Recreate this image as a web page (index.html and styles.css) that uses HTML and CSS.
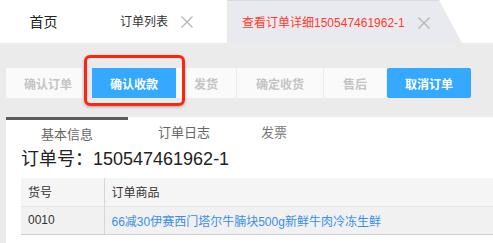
FILE: index.html
```html
<!DOCTYPE html>
<html lang="zh-CN">
<head>
    <meta charset="UTF-8">
    <meta name="viewport" content="width=device-width, initial-scale=1.0">
    <title>查看订单详细</title>
    <link rel="stylesheet" href="styles.css">
</head>
<body>

<div class="tabbar">
    <div class="tab tab-home">首页</div>
    <div class="tab tab-closable">
        <span>订单列表</span>
        <svg class="close" width="12" height="12" viewBox="0 0 12 12"><path d="M0.5 0.5L11.5 11.5M11.5 0.5L0.5 11.5"/></svg>
    </div>
    <div class="tab tab-closable tab-active">
        <span>查看订单详细150547461962-1</span>
        <svg class="close" width="12" height="12" viewBox="0 0 12 12"><path d="M0.5 0.5L11.5 11.5M11.5 0.5L0.5 11.5"/></svg>
    </div>
</div>

<div class="actions">
    <button class="btn btn-first">确认订单</button>
    <div class="highlight-wrap">
        <button class="btn btn-primary btn-wide">确认收款</button>
        <div class="highlight"></div>
    </div>
    <button class="btn btn-ship">发货</button>
    <button class="btn btn-receive">确定收货</button>
    <button class="btn btn-after">售后</button>
    <button class="btn btn-primary btn-wide">取消订单</button>
</div>

<div class="panel">
    <div class="detail-tabs">
        <div class="detail-tab active">基本信息</div>
        <div class="detail-tab log">订单日志</div>
        <div class="detail-tab invoice">发票</div>
    </div>
    <div class="panel-body">
        <h2 class="order-no">订单号：150547461962-1</h2>
        <table class="goods">
            <thead>
                <tr>
                    <th class="col-no">货号</th>
                    <th>订单商品</th>
                </tr>
            </thead>
            <tbody>
                <tr>
                    <td class="col-no">0010</td>
                    <td><a href="#">66减30伊赛西门塔尔牛腩块500g新鲜牛肉冷冻生鲜</a></td>
                </tr>
            </tbody>
        </table>
    </div>
</div>

</body>
</html>
```

FILE: styles.css
```css
body {
    margin: 0;
    width: 493px;
    height: 243px;
    overflow: hidden;
    background: #ebebeb;
    font-family: "Liberation Sans", "Noto Sans CJK SC", sans-serif;
    font-size: 12px;
    color: #333;
}
.tabbar {
    display: flex;
    height: 43px;
    background: #fff;
}
.tab {
    display: flex;
    flex: none;
    align-items: center;
    height: 43px;
    box-sizing: border-box;
    line-height: 16px;
    padding-top: 1px;
    white-space: nowrap;
}
.tab-home {
    width: 87px;
    justify-content: center;
    font-size: 14px;
    color: #222;
}
.tab-closable {
    padding: 1px 34px 0 33px;
    gap: 13px;
    color: #333;
}
.tab-active {
    width: 235px;
    padding-left: 15px;
    padding-right: 0;
    color: #ff3b2b;
    background: #e9eaf0;
    border-top: 1px solid #dadbe0;
    clip-path: polygon(0 0, calc(100% - 23px) 0, 100% 100%, 0 100%);
}
.close {
    flex: none;
    fill: none;
    stroke: #b5b5b5;
    stroke-width: 1.3;
}
.actions {
    display: flex;
    margin-top: 25px;
    padding-left: 6px;
    height: 30px;
}
.btn {
    height: 30px;
    border: none;
    margin: 0 1px 0 0;
    padding: 0;
    background: #fafafa;
    color: #c4c4c4;
    font-family: inherit;
    font-size: 12px;
    font-weight: bold;
}
.btn-first {
    width: 76px;
    padding-left: 8px;
    margin-right: 10px;
}
.btn-primary {
    background: #35a8ff;
    color: #fff;
    border-radius: 2px;
}
.btn-wide {
    width: 84px;
}
.highlight-wrap {
    position: relative;
    display: flex;
}
.highlight-wrap .btn {
    margin-right: 0;
    border-radius: 0;
}
.highlight {
    position: absolute;
    left: -8px;
    top: -13px;
    right: -9px;
    bottom: -8px;
    border: 3px solid #ff2410;
    border-radius: 6px;
    box-shadow: 0 1px 3px rgba(0, 0, 0, 0.3);
}
.btn-ship {
    width: 60px;
}
.btn-receive {
    width: 86px;
}
.btn-after {
    width: 62px;
}
.panel {
    margin: 19px 0 0 6px;
    background: #fff;
    height: 126px;
}
.detail-tabs {
    display: flex;
    height: 30px;
}
.detail-tab {
    font-size: 13px;
    line-height: 16px;
    color: #666;
    padding-top: 8px;
}
.detail-tab.active {
    width: 122px;
    text-align: center;
    border-top: 3px solid #5c5c5c;
    padding-top: 7px;
}
.detail-tab.log {
    margin-left: 30px;
}
.detail-tab.invoice {
    margin-left: 51px;
    color: #777;
}
.panel-body {
    padding-left: 15px;
}
.order-no {
    margin: 0 0 7px;
    font-size: 18px;
    line-height: 24px;
    font-weight: normal;
    color: #222;
}
.goods {
    width: 472px;
    border-collapse: collapse;
}
.goods th, .goods td {
    height: 28px;
    padding: 0 0 0 7px;
    text-align: left;
    font-weight: normal;
    box-sizing: border-box;
}
.goods th {
    background: #f5f5f5;
}
.goods td {
    background: #f1f1f1;
    border-top: 1px solid #e6e6e6;
    border-bottom: 1px solid #cecece;
}
.goods .col-no {
    width: 83px;
    border-right: 1px solid #d6d6d6;
}
.goods a {
    color: #3a8ee6;
    text-decoration: none;
}
```
